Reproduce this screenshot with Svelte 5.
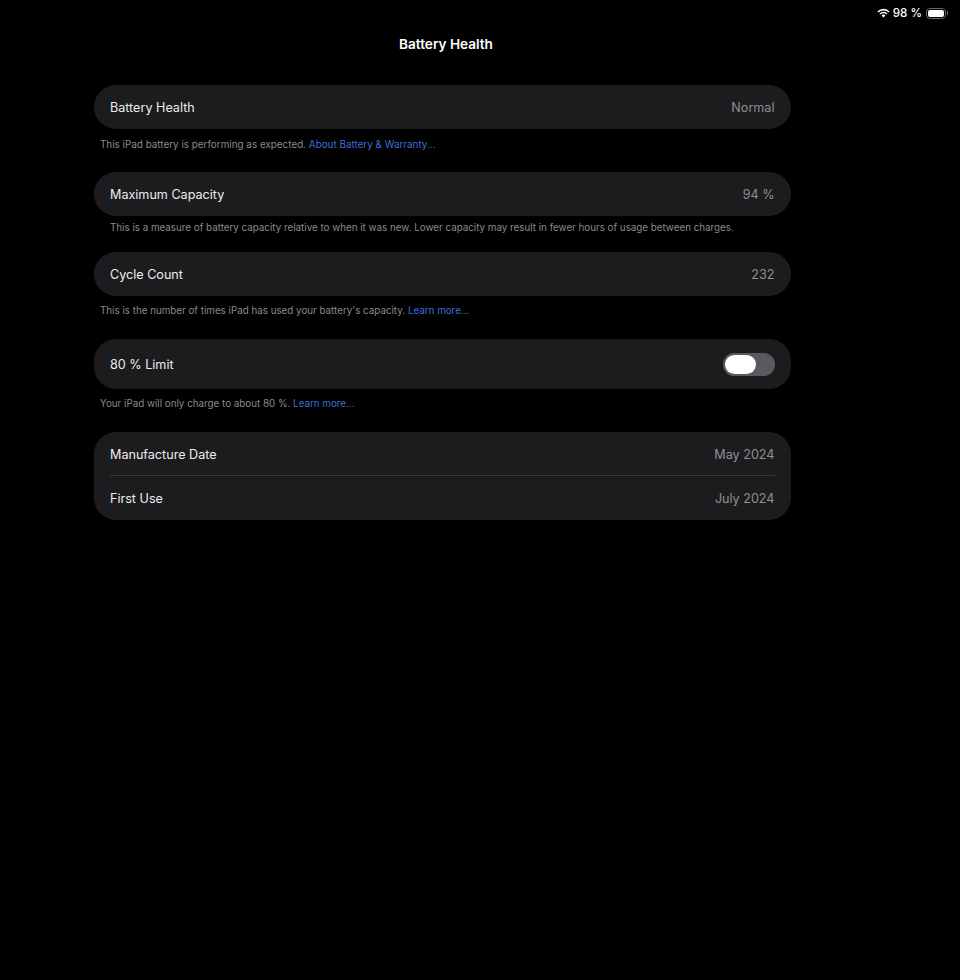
<script>
	const link = 'Learn more...';
</script>

<div class="screen">
	<div class="status">
		<svg class="wifi" width="13" height="10" viewBox="0 0 13 10">
			<path d="M0.4 3.4a8.6 8.6 0 0 1 12.2 0l-1 1.1a7.2 7.2 0 0 0-10.2 0z" fill="#fff" />
			<path d="M2.5 5.5a5.6 5.6 0 0 1 8 0l-1 1.1a4.2 4.2 0 0 0-6 0z" fill="#fff" />
			<path d="M4.6 7.5a2.8 2.8 0 0 1 3.8 0L6.5 9.6z" fill="#fff" />
		</svg>
		<span class="pct">98 %</span>
		<div class="battery"><div class="level"></div></div>
		<div class="nub"></div>
	</div>

	<h1>Battery Health</h1>

	<div class="content">
		<div class="card first">
			<div class="row"><span>Battery Health</span><span class="value">Normal</span></div>
		</div>
		<p class="note note-1 wide">This iPad battery is performing as expected. <span class="link">About Battery &amp; Warranty...</span></p>

		<div class="card">
			<div class="row"><span>Maximum Capacity</span><span class="value">94 %</span></div>
		</div>
		<p class="note note-2 inset">This is a measure of battery capacity relative to when it was new. Lower capacity may result in fewer hours of usage between charges.</p>

		<div class="card">
			<div class="row"><span>Cycle Count</span><span class="value">232</span></div>
		</div>
		<p class="note note-1">This is the number of times iPad has used your battery's capacity. <span class="link">{link}</span></p>

		<div class="card">
			<div class="row tall">
				<span>80 % Limit</span>
				<div class="toggle"><div class="knob"></div></div>
			</div>
		</div>
		<p class="note note-1">Your iPad will only charge to about 80 %. <span class="link">{link}</span></p>

		<div class="card group">
			<div class="row top"><span>Manufacture Date</span><span class="value">May 2024</span></div>
			<div class="sep"></div>
			<div class="row"><span>First Use</span><span class="value">July 2024</span></div>
		</div>
	</div>
</div>

<style>
	:global(body) {
		background: #000;
	}

	.screen {
		width: 960px;
		height: 980px;
		background: #000;
		color: #ececee;
		font-family: Inter, 'Liberation Sans', sans-serif;
		overflow: hidden;
	}

	.status {
		display: flex;
		justify-content: flex-end;
		align-items: center;
		height: 26px;
		padding-right: 12px;
		font-size: 11.6px;
		font-weight: 500;
		color: #fff;
	}

	.wifi {
		margin-right: 3px;
	}

	.pct {
		margin-right: 4px;
	}

	.battery {
		width: 20px;
		height: 11px;
		border: 1px solid #666;
		border-radius: 4px;
		padding: 1px;
		box-sizing: border-box;
	}

	.level {
		width: 100%;
		height: 100%;
		background: #fff;
		border-radius: 2px;
	}

	.nub {
		width: 1px;
		height: 4px;
		background: #666;
		margin-left: 1px;
	}

	h1 {
		margin: 8px 0 0;
		height: 51px;
		line-height: 21px;
		text-align: center;
		font-size: 13.6px;
		font-weight: 600;
		color: #fff;
		width: 892px;
	}

	.content {
		width: 697px;
		margin-left: 94px;
	}

	.card {
		background: #1c1c1e;
		border-radius: 22px;
		font-size: 12.6px;
	}

	.row {
		display: flex;
		justify-content: space-between;
		align-items: center;
		height: 44px;
		padding: 0 16.5px 0 16px;
		box-sizing: border-box;
	}

	.row.top {
		height: 43px;
		padding-top: 1px;
	}

	.row.tall {
		height: 50px;
	}

	.value {
		color: #8e8e93;
	}

	.sep {
		height: 1px;
		margin-left: 16px;
		margin-right: 16px;
		background: #3a3a3c;
	}

	.note {
		margin: 0;
		font-size: 9.8px;
		color: #8a8a8e;
		padding-left: 6px;
	}

	.note.wide {
		font-size: 9.88px;
	}

	.note-1 {
		padding-top: 8px;
		height: 35px;
		line-height: 14px;
		box-sizing: content-box;
	}

	.note-2 {
		padding-top: 5px;
		height: 31px;
		line-height: 14px;
	}

	.inset {
		padding-left: 16px;
	}

	.link {
		color: #3f6fd8;
	}

	.toggle {
		width: 52px;
		height: 23px;
		border-radius: 12px;
		background: #5a5a5e;
		padding: 2px;
		box-sizing: border-box;
	}

	.knob {
		width: 31px;
		height: 19px;
		border-radius: 10px;
		background: #fff;
	}
</style>
